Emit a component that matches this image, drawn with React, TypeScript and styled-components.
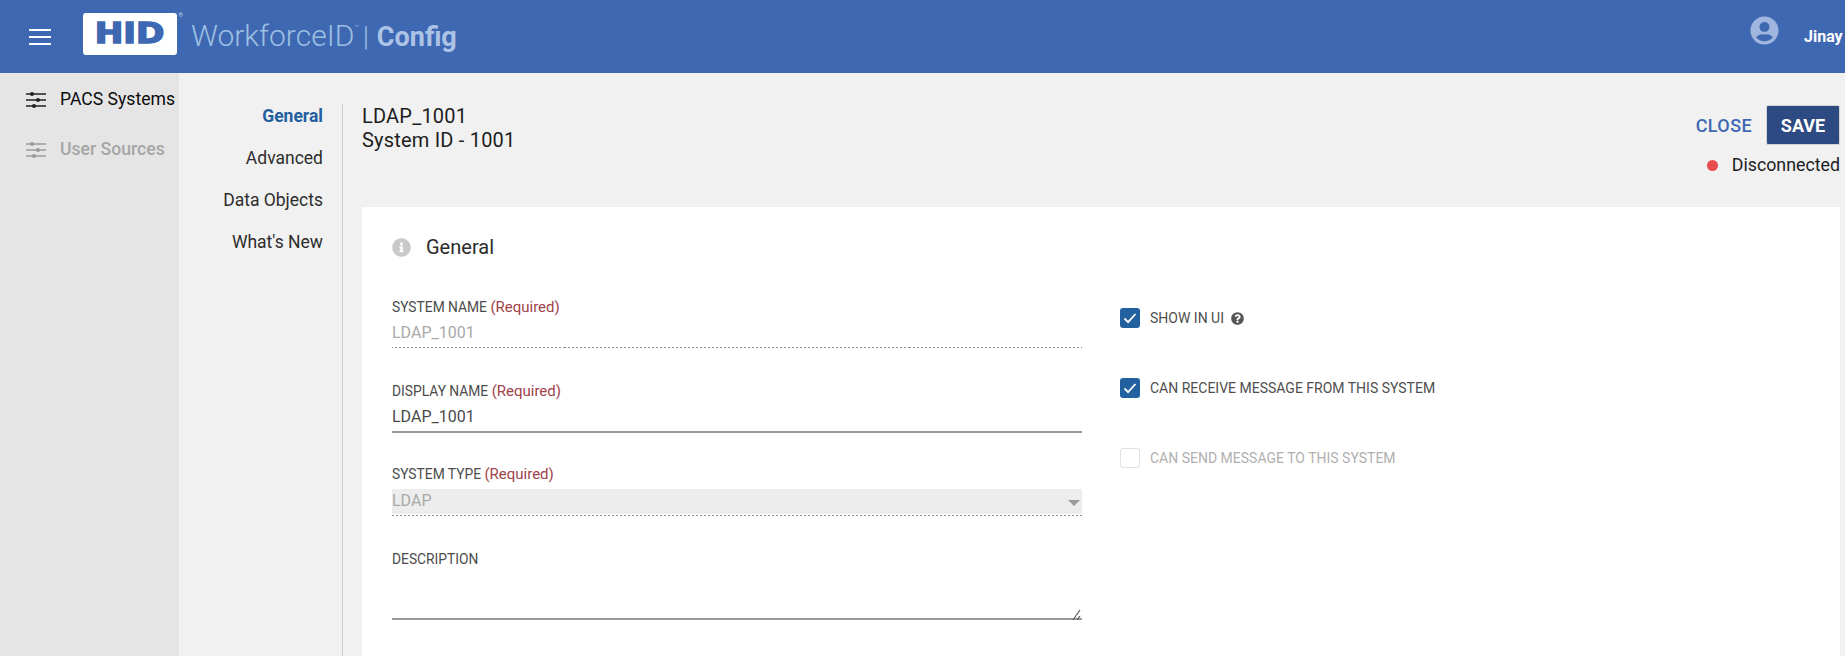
import React from "react";
import styled, { createGlobalStyle } from "styled-components";
import { FaInfoCircle, FaQuestionCircle, FaUserCircle } from "react-icons/fa";

const GlobalStyle = createGlobalStyle`
  html, body {
    margin: 0;
    padding: 0;
    height: 100%;
    overflow: hidden;
    background: #f1f1f1;
    font-family: Roboto, "Liberation Sans", sans-serif;
  }
`;

const dashes = "repeating-linear-gradient(90deg, #8e8e8e 0 2px, transparent 2px 4px)";

const Page = styled.div`
  width: 1845px;
  height: 656px;
  display: flex;
  flex-direction: column;
  overflow: hidden;
`;

const Header = styled.header`
  height: 73px;
  flex-shrink: 0;
  background: #3f68b3;
  display: flex;
  align-items: center;
  padding-left: 29px;
`;

const Burger = styled.div`
  width: 22px;
  height: 16px;
  margin-right: 32px;
  display: flex;
  flex-direction: column;
  justify-content: space-between;
  span {
    height: 2px;
    background: #fff;
  }
`;

const LogoBox = styled.div`
  position: relative;
  width: 94px;
  height: 42px;
  margin-top: -5px;
  background: #fff;
  border-radius: 3px;
  display: flex;
  align-items: center;
  justify-content: center;
`;

const LogoText = styled.span`
  font-family: "DejaVu Sans", sans-serif;
  font-weight: 700;
  font-size: 28px;
  line-height: 1;
  color: #3f68b3;
  transform: scaleX(1.22);
  letter-spacing: 0;
  -webkit-text-stroke: 1.5px #3f68b3;
`;

const LogoMark = styled.span`
  position: absolute;
  top: -2px;
  right: -6px;
  font-size: 6px;
  color: #c5d5ec;
`;

const Brand = styled.div`
  margin-left: 14px;
  margin-top: -2px;
  display: flex;
  align-items: baseline;
  font-size: 30px;
  font-weight: 300;
  color: #9dbfe2;
  white-space: nowrap;
  sup {
    font-size: 7px;
    align-self: flex-start;
    margin-top: 6px;
  }
`;

const BrandPipe = styled.span`
  margin: 0 8px 0 4px;
  font-size: 28px;
`;

const BrandStrong = styled.span`
  font-weight: 700;
  font-size: 27px;
  color: #adc3e6;
`;

const UserArea = styled.div`
  margin-left: auto;
  display: flex;
  align-items: center;
  gap: 25px;
  width: 95px;
  height: 73px;
  overflow: hidden;
  flex-shrink: 0;
  color: #a0b6de;
`;

const UserIcon = styled(FaUserCircle)`
  width: 29px;
  height: 29px;
  flex-shrink: 0;
  margin-bottom: 13px;
`;

const UserName = styled.span`
  color: #fff;
  font-size: 16px;
  font-weight: 700;
`;

const Body = styled.div`
  flex: 1;
  display: flex;
  min-height: 0;
`;

const Sidebar = styled.nav`
  width: 179px;
  flex-shrink: 0;
  background: #e5e5e5;
  padding-top: 14px;
  display: flex;
  flex-direction: column;
  gap: 26px;
`;

const SideItem = styled.div<{ $active?: boolean }>`
  height: 24px;
  display: flex;
  align-items: center;
  gap: 14px;
  padding-left: 26px;
  font-size: 17.6px;
  white-space: nowrap;
  color: ${(p) => (p.$active ? "#0c0c0c" : "#a5a5a5")};
  font-weight: ${(p) => (p.$active ? 400 : 500)};
  svg {
    margin-top: 2px;
    color: ${(p) => (p.$active ? "#222" : "#9a9a9a")};
  }
`;

const Tabs = styled.nav`
  width: 164px;
  flex-shrink: 0;
  margin-top: 31px;
  box-sizing: border-box;
  padding-right: 19px;
  border-right: 1px solid #cccccc;
  display: flex;
  flex-direction: column;
  align-items: flex-end;
  gap: 18px;
`;

const TabItem = styled.div<{ $active?: boolean }>`
  height: 24px;
  line-height: 24px;
  font-size: 17.5px;
  color: ${(p) => (p.$active ? "#24609f" : "#2d2d2d")};
  font-weight: ${(p) => (p.$active ? 700 : 400)};
`;

const Main = styled.main`
  flex: 1;
  min-width: 0;
  padding: 32px 5px 0 19px;
  display: flex;
  flex-direction: column;
`;

const TitleBar = styled.div`
  height: 102px;
  display: flex;
  justify-content: space-between;
  flex-shrink: 0;
`;

const Title = styled.div`
  margin-top: -1px;
  font-size: 20px;
  line-height: 24px;
  letter-spacing: 0.2px;
  color: #1d1d1d;
`;

const ActionColumn = styled.div`
  display: flex;
  flex-direction: column;
  align-items: flex-end;
`;

const ActionRow = styled.div`
  display: flex;
  align-items: center;
  gap: 14px;
`;

const CloseLink = styled.span`
  font-size: 18px;
  font-weight: 500;
  letter-spacing: 0.4px;
  color: #3f68b3;
`;

const SaveButton = styled.button`
  width: 74px;
  height: 40px;
  border: 1px solid #d5d5d5;
  border-radius: 2px;
  background: #2d4a82;
  color: #fff;
  font-family: inherit;
  font-size: 18px;
  font-weight: 700;
  padding: 0;
`;

const Status = styled.div`
  margin-top: 9px;
  display: flex;
  align-items: center;
  gap: 14px;
  font-size: 17.8px;
  line-height: 22px;
  color: #1d1d1d;
`;

const StatusDot = styled.span`
  width: 11px;
  height: 11px;
  border-radius: 50%;
  background: #e84c4f;
`;

const Card = styled.section`
  flex: 1;
  background: #fff;
  padding: 29px 30px 0;
  min-height: 0;
`;

const CardTitle = styled.h2`
  margin: 0 0 40px;
  height: 22px;
  display: flex;
  align-items: center;
  gap: 15px;
  font-size: 20px;
  font-weight: 400;
  color: #2b2b2b;
  svg {
    color: #c9c9c9;
    width: 19px;
    height: 19px;
  }
`;

const Columns = styled.div`
  display: flex;
  gap: 38px;
`;

const FormColumn = styled.div`
  width: 690px;
  flex-shrink: 0;
  display: flex;
  flex-direction: column;
`;

const Field = styled.div<{ $height: number }>`
  height: ${(p) => p.$height}px;
`;

const Label = styled.div`
  height: 18px;
  line-height: 18px;
  font-size: 13.8px;
  color: #4c4c4c;
  white-space: nowrap;
`;

const Required = styled.span`
  font-size: 15px;
  color: #a0424a;
`;

const DisabledValue = styled.div`
  height: 32px;
  box-sizing: border-box;
  line-height: 33px;
  font-size: 16px;
  color: #a9a9a9;
  border-bottom: 1px solid transparent;
  border-image: ${dashes} 1;
`;

const Value = styled.div`
  height: 33px;
  box-sizing: border-box;
  line-height: 33px;
  font-size: 16px;
  color: #4a4a4a;
  border-bottom: 2px solid #9a9a9a;
`;

const SelectValue = styled.div`
  margin-top: 6px;
  height: 25px;
  box-sizing: border-box;
  display: flex;
  align-items: center;
  justify-content: space-between;
  padding: 0 2px 2px 0;
  font-size: 16px;
  color: #a9a9a9;
  background: #ededed;
`;

const DottedRule = styled.div`
  margin-top: 1px;
  height: 1px;
  background: ${dashes};
`;

const Caret = styled.span`
  width: 0;
  height: 0;
  margin-top: 4px;
  border-left: 6px solid transparent;
  border-right: 6px solid transparent;
  border-top: 6px solid #9a9a9a;
`;

const TextAreaBox = styled.div`
  position: relative;
  height: 50px;
  border-bottom: 2px solid #9a9a9a;
`;

const ResizeGrip = styled.svg`
  position: absolute;
  right: 0;
  bottom: -3px;
`;

const CheckColumn = styled.div`
  padding-top: 10px;
  display: flex;
  flex-direction: column;
  gap: 50px;
`;

const CheckRow = styled.div<{ $disabled?: boolean }>`
  height: 20px;
  display: flex;
  align-items: center;
  gap: 10px;
  font-size: 14px;
  color: ${(p) => (p.$disabled ? "#b0b0b0" : "#4f4f4f")};
`;

const CheckBox = styled.span<{ $checked?: boolean }>`
  width: 20px;
  height: 20px;
  box-sizing: border-box;
  border-radius: 3px;
  display: flex;
  align-items: center;
  justify-content: center;
  background: ${(p) => (p.$checked ? "#23609f" : "#fff")};
  border: ${(p) => (p.$checked ? "none" : "1px solid #e2e2e2")};
`;

const HelpIcon = styled(FaQuestionCircle)`
  width: 13px;
  height: 13px;
  margin-left: -3px;
  color: #555;
`;

const SlidersIcon = () => (
  <svg width="20" height="18" viewBox="0 0 20 18" fill="none" stroke="currentColor">
    <path d="M0 3h20M0 9h20M0 15h20" strokeWidth="1.6" />
    <circle cx="6" cy="3" r="2" fill="currentColor" stroke="none" />
    <circle cx="12" cy="9" r="2" fill="currentColor" stroke="none" />
    <circle cx="8" cy="15" r="2" fill="currentColor" stroke="none" />
  </svg>
);

const CheckMark = () => (
  <svg width="14" height="12" viewBox="0 0 14 12" fill="none">
    <path d="M1.5 6.5l3.6 3.6L12.5 2" stroke="#fff" strokeWidth="1.8" />
  </svg>
);

const App = () => (
  <Page>
    <GlobalStyle />
    <Header>
      <Burger>
        <span />
        <span />
        <span />
      </Burger>
      <LogoBox>
        <LogoText>HID</LogoText>
        <LogoMark>®</LogoMark>
      </LogoBox>
      <Brand>
        WorkforceID<sup>™</sup>
        <BrandPipe>|</BrandPipe>
        <BrandStrong>Config</BrandStrong>
      </Brand>
      <UserArea>
        <UserIcon />
        <UserName>Jinay</UserName>
      </UserArea>
    </Header>
    <Body>
      <Sidebar>
        <SideItem $active>
          <SlidersIcon />
          PACS Systems
        </SideItem>
        <SideItem>
          <SlidersIcon />
          User Sources
        </SideItem>
      </Sidebar>
      <Tabs>
        <TabItem $active>General</TabItem>
        <TabItem>Advanced</TabItem>
        <TabItem>Data Objects</TabItem>
        <TabItem>What's New</TabItem>
      </Tabs>
      <Main>
        <TitleBar>
          <Title>
            LDAP_1001
            <br />
            System ID - 1001
          </Title>
          <ActionColumn>
            <ActionRow>
              <CloseLink>CLOSE</CloseLink>
              <SaveButton>SAVE</SaveButton>
            </ActionRow>
            <Status>
              <StatusDot />
              Disconnected
            </Status>
          </ActionColumn>
        </TitleBar>
        <Card>
          <CardTitle>
            <FaInfoCircle />
            General
          </CardTitle>
          <Columns>
            <FormColumn>
              <Field $height={84}>
                <Label>
                  SYSTEM NAME <Required>(Required)</Required>
                </Label>
                <DisabledValue>LDAP_1001</DisabledValue>
              </Field>
              <Field $height={83}>
                <Label>
                  DISPLAY NAME <Required>(Required)</Required>
                </Label>
                <Value>LDAP_1001</Value>
              </Field>
              <Field $height={85}>
                <Label>
                  SYSTEM TYPE <Required>(Required)</Required>
                </Label>
                <SelectValue>
                  LDAP
                  <Caret />
                </SelectValue>
                <DottedRule />
              </Field>
              <Field $height={70}>
                <Label>DESCRIPTION</Label>
                <TextAreaBox>
                  <ResizeGrip width="10" height="12" viewBox="0 0 10 12" fill="none" stroke="#555">
                    <path d="M1 11L8 1M5 11l3-4" strokeWidth="1.2" />
                  </ResizeGrip>
                </TextAreaBox>
              </Field>
            </FormColumn>
            <CheckColumn>
              <CheckRow>
                <CheckBox $checked>
                  <CheckMark />
                </CheckBox>
                SHOW IN UI
                <HelpIcon />
              </CheckRow>
              <CheckRow>
                <CheckBox $checked>
                  <CheckMark />
                </CheckBox>
                CAN RECEIVE MESSAGE FROM THIS SYSTEM
              </CheckRow>
              <CheckRow $disabled>
                <CheckBox />
                CAN SEND MESSAGE TO THIS SYSTEM
              </CheckRow>
            </CheckColumn>
          </Columns>
        </Card>
      </Main>
    </Body>
  </Page>
);

export default App;
